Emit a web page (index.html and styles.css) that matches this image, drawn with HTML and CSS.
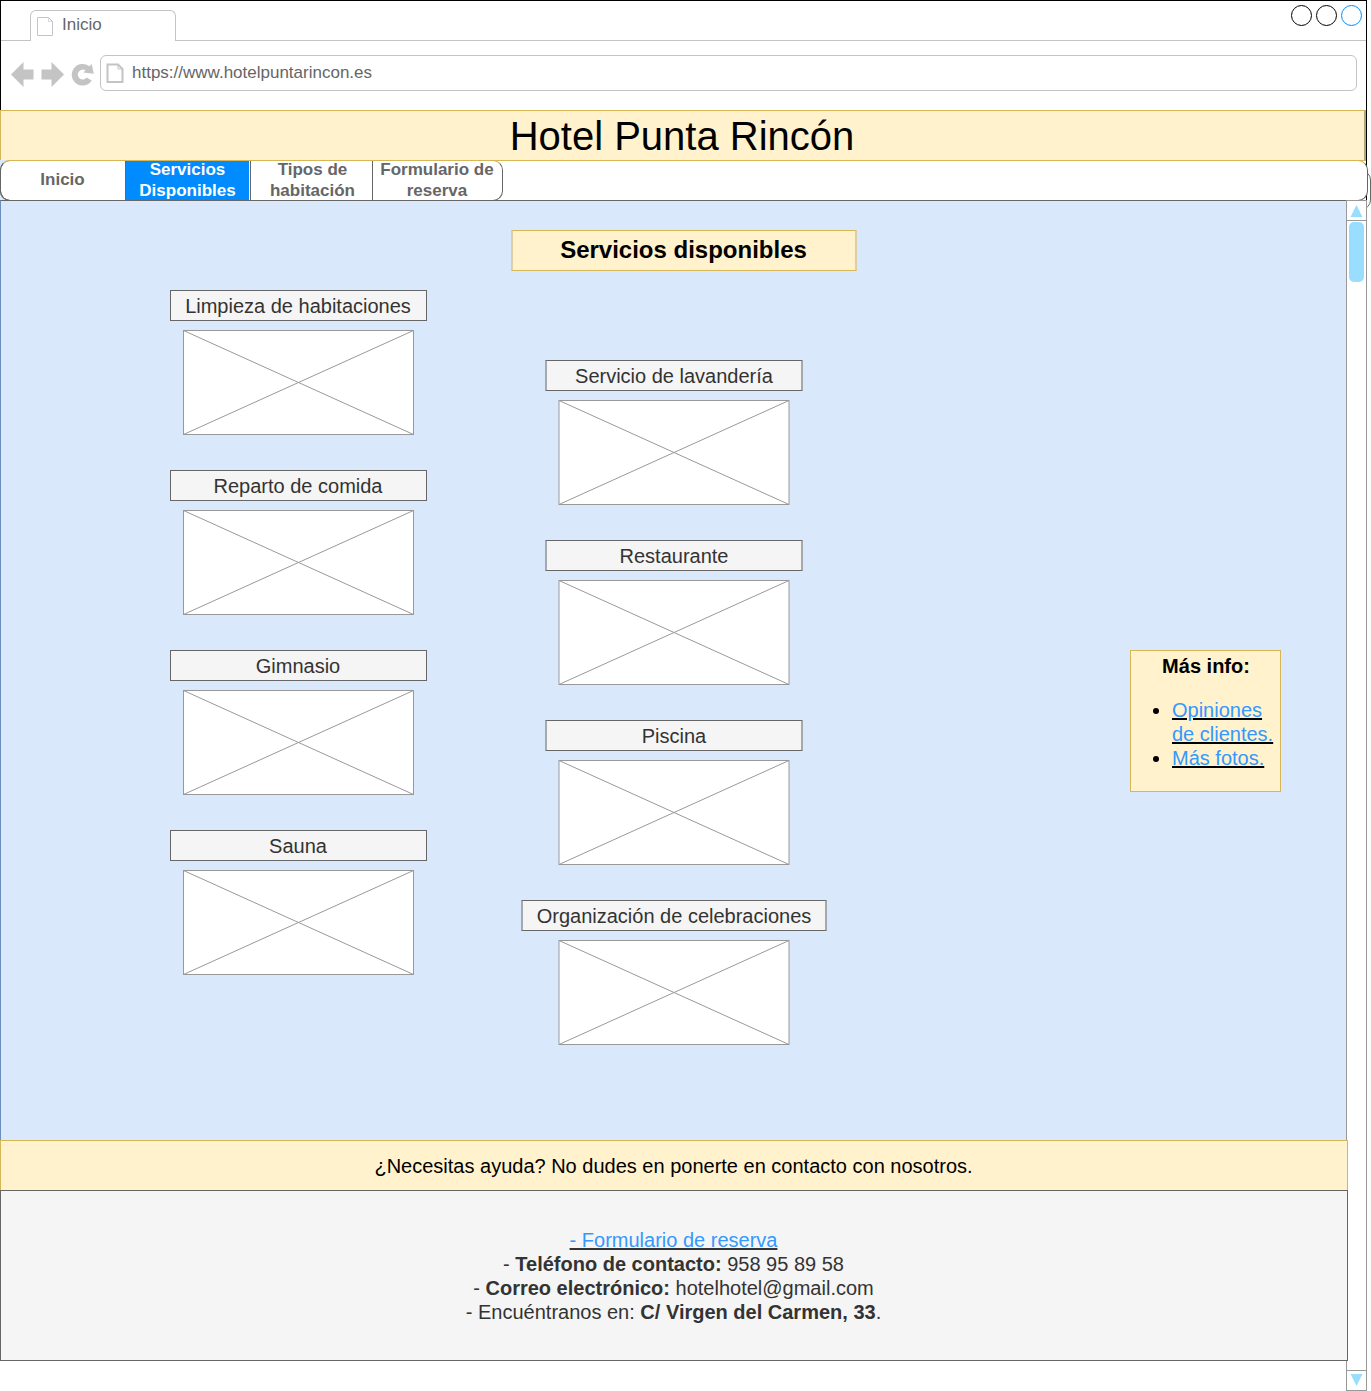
FILE: index.html
```html
<!DOCTYPE html>
<html lang="es">
<head>
<meta charset="utf-8">
<title>Hotel Punta Rincón</title>
<link rel="stylesheet" href="styles.css">
</head>
<body>
<svg width="0" height="0" class="defs">
  <symbol id="photo" viewBox="0 0 231 105"><rect x=".5" y=".5" width="230" height="104" fill="#fff" stroke="#999"/><path d="M.5.5l230 104M.5 104.5l230-104" stroke="#999" fill="none"/></symbol>
  <symbol id="photo-half" viewBox="0 0 232 105"><rect x="1" y=".5" width="230" height="104" fill="#fff" stroke="#999"/><path d="M1 .5l230 104M1 104.5l230-104" stroke="#999" fill="none"/></symbol>
</svg>
<div class="page">
  <div class="window">
    <div class="tabbar">
      <div class="tabbar-lead"></div>
      <div class="browser-tab">
        <svg width="17" height="20" viewBox="0 0 17 20" fill="none" stroke="#c4c4c4"><path d="M.5.5h11l4 4v14H.5z"/><path d="M11.5.5v4h4" stroke-width=".6"/></svg>
        <span>Inicio</span>
      </div>
      <div class="tabbar-rest">
        <i class="circle"></i><i class="circle"></i><i class="circle blue"></i>
      </div>
    </div>
    <div class="toolbar">
      <svg class="tools" width="90" height="30" viewBox="8 60 90 30" fill="#c4c4c4"><path d="M11 74.5L23.5 62v7.5h10v10h-10V87zM64 74.5L51.500 62v7.5h-10v10h10V87z"/><path d="M91.700 80.500A10.800 10.800 0 1 1 89.300 66.300L91.700 64 93.800 73.800 83.300 72.600 85.500 70.500A4.900 4.900 0 1 0 86.600 77.500z"/></svg>
      <div class="address">
        <svg width="19" height="21" viewBox="0 0 19 21" fill="none" stroke="#c4c4c4" stroke-width="2"><path d="M1.500 1.500h10.500l4.500 4.500v13h-15z"/><path d="M12 1.500v4.500h4.500" stroke-width="1"/></svg>
        <span>https://www.hotelpuntarincon.es</span>
      </div>
    </div>
  </div>
  <header class="banner">Hotel Punta Rincón</header>
  <div class="nav-shadow"></div>
  <div class="nav-row">
    <nav class="nav">
      <div class="nav-tabs">
        <a class="nav-item first">Inicio</a>
        <a class="nav-item active">Servicios<br>Disponibles</a>
        <a class="nav-item third">Tipos de<br>habitación</a>
        <a class="nav-item last">Formulario de<br>reserva</a>
      </div>
    </nav>
  </div>
  <div class="body">
    <div class="content">
      <main class="main">
        <h1 class="title">Servicios disponibles</h1>
        <div class="columns">
          <div class="services left">
            <section class="service"><h2 class="label">Limpieza de habitaciones</h2><svg class="photo"><use href="#photo"/></svg></section>
            <section class="service"><h2 class="label">Reparto de comida</h2><svg class="photo"><use href="#photo"/></svg></section>
            <section class="service"><h2 class="label">Gimnasio</h2><svg class="photo"><use href="#photo"/></svg></section>
            <section class="service"><h2 class="label">Sauna</h2><svg class="photo"><use href="#photo"/></svg></section>
          </div>
          <div class="services right">
            <section class="service"><h2 class="label">Servicio de lavandería</h2><svg class="photo"><use href="#photo-half"/></svg></section>
            <section class="service"><h2 class="label">Restaurante</h2><svg class="photo"><use href="#photo-half"/></svg></section>
            <section class="service"><h2 class="label">Piscina</h2><svg class="photo"><use href="#photo-half"/></svg></section>
            <section class="service"><h2 class="label wide">Organización de celebraciones</h2><svg class="photo"><use href="#photo-half"/></svg></section>
          </div>
          <aside class="info">
            <h3>Más info:</h3>
            <ul>
              <li><u><a>Opiniones de clientes.</a></u></li>
              <li><u><a>Más fotos.</a></u></li>
            </ul>
          </aside>
        </div>
      </main>
      <div class="help">¿Necesitas ayuda? No dudes en ponerte en contacto con nosotros.</div>
      <footer class="footer">
        <div><u><a>- Formulario de reserva</a></u></div>
        <div>- <b>Teléfono de contacto:</b> 958 95 89 58</div>
        <div>- <b>Correo electrónico:</b> hotelhotel@gmail.com</div>
        <div>- Encuéntranos en: <b>C/ Virgen del Carmen, 33</b>.</div>
      </footer>
    </div>
    <div class="scrollbar">
      <div class="arrow"><svg width="13" height="12" viewBox="0 0 13 12"><path d="M6.500 0L12.500 12H.5z" fill="#9df"/></svg></div>
      <div class="track"><div class="thumb"></div></div>
      <div class="arrow down"><svg width="13" height="12" viewBox="0 0 13 12"><path d="M.5 0h12l-6 12z" fill="#9df"/></svg></div>
    </div>
  </div>
</div>
</body>
</html>
```
FILE: styles.css
```css
* { box-sizing: border-box; }
body { margin: 0; background: #fff; font-family: "Liberation Sans", Arial, sans-serif; font-size: 20px; line-height: 24px; color: #000; }
h1, h2, h3, ul { margin: 0; padding: 0; }
.defs { position: absolute; }
.page { position: relative; width: 1371px; height: 1391px; display: flex; flex-direction: column; overflow: hidden; }

.window { width: 1367px; height: 110px; border: 1px solid #000; border-bottom: 0; color: #666; font-size: 17px; }
.tabbar { display: flex; height: 40px; align-items: flex-end; }
.tabbar-lead { width: 29px; border-bottom: 1px solid #c4c4c4; }
.browser-tab { display: flex; width: 146px; height: 31px; padding: 6px 0 0 6px; gap: 8px; border: 1px solid #c4c4c4; border-bottom: 0; border-radius: 6px 6px 0 0; line-height: 20px; }
.browser-tab span { margin-top: -2px; }
.tabbar-rest { flex: 1; height: 40px; display: flex; justify-content: flex-end; gap: 4px; padding: 4px 4px 0 0; border-bottom: 1px solid #c4c4c4; }
.circle { width: 21px; height: 21px; border: 1px solid #000; border-radius: 50%; }
.circle.blue { border-color: #008cff; }
.toolbar { display: flex; padding: 14px 9px 0 7px; }
.tools { margin: 5px 0 0; }
.address { flex: 1; height: 36px; margin-left: 2px; padding: 7px 0 0 5px; display: flex; gap: 7px; border: 1px solid #c4c4c4; border-radius: 6px; line-height: 20px; }

.banner { width: 1366px; height: 51px; border: 1px solid #d6b656; border-right: 2px solid #b3a678; background: #fff2cc; font-size: 40px; line-height: 50px; text-align: center; padding-right: 1px; box-shadow: 1px 0 #000; }
.nav-shadow { position: absolute; left: 1300px; top: 170px; width: 71px; height: 40px; border: 1px solid #666; border-radius: 10px; }
.nav-row { position: relative; width: 1368px; height: 41px; margin-top: -1px; background: linear-gradient(#000, #000) 1366px 0 / 1px 100% no-repeat, linear-gradient(#dae8fc, #dae8fc) 0 0 / 1346px 100% no-repeat; }
.nav { width: 1368px; height: 41px; border: 1px solid #666; border-top-color: #d6b656; border-radius: 10px; background: #fff; }
.nav-tabs { display: flex; width: 503px; height: 41px; margin: -1px; border: 1px solid #666; border-top-color: #d6b656; border-radius: 10px; font-size: 17px; line-height: 20.6px; font-weight: bold; color: #666; text-align: center; }
.nav-item { display: flex; align-items: center; justify-content: center; height: 39px; }
.first { width: 124px; padding-right: 1px; }
.active { width: 124px; margin-right: 1px; border-left: 1px solid #666; background: #008cff; color: #fff; }
.third { width: 122px; border-left: 1px solid #666; padding-left: 2px; }
.last { flex: 1; border-left: 1px solid #666; padding-right: 1px; }

.body { display: grid; grid-template-columns: 1346px 21px; height: 1191px; margin-top: -1px; }
.content { position: relative; z-index: 1; }
.main { height: 940px; padding-top: 29px; border-left: 1px solid #6c8ebf; border-top: 1px solid #666; background: #dae8fc; }
.title { width: 346px; height: 41px; margin-left: 510px; border: 1px solid #d6b656; border-inline: 2px solid #dfcda3; padding-right: 1px; background: #fff2cc; font-size: 24px; line-height: 38px; text-align: center; }
.columns { display: flex; padding: 19px 0 0 169px; }
.services { display: flex; flex-direction: column; align-items: center; gap: 35px; }
.left { width: 257px; }
.right { width: 306px; margin: 70px 0 0 94px; }
.service { display: flex; flex-direction: column; align-items: center; }
.label { width: 257px; height: 31px; padding-right: 1px; border: 1px solid #666; background: #f5f5f5; color: #333; font-size: 20px; line-height: 30px; font-weight: normal; text-align: center; }
.photo { display: block; width: 231px; height: 105px; margin-top: 9px; }
.right .label { width: 258px; padding-right: 0; border-inline: 2px solid #a5a9ad; }
.right .label.wide { width: 306px; }
.right .photo { width: 232px; }
.info { width: 151px; height: 142px; margin: 360px 0 0 303px; padding-top: 3px; border: 1px solid #d6b656; background: #fff2cc; }
.info h3 { padding-left: 1px; font-size: 20px; text-align: center; }
.info ul { padding: 20px 0 0 41px; }
u a { color: #39f; }

.help, .footer { position: relative; width: 1348px; padding-right: 1px; text-align: center; }
.help { height: 51px; border: 1px solid #d6b656; background: #fff2cc; line-height: 50px; }
.footer { height: 171px; margin-top: -1px; padding-top: 37px; border: 1px solid #666; background: #f5f5f5; color: #333; }

.scrollbar { display: flex; flex-direction: column; position: relative; border: 1px solid #999; background: #fff; }
.arrow { height: 20px; padding: 4px 0 0 3px; line-height: 0; border-bottom: 1px solid #999; }
.track { flex: 1; padding: 1px 2px; }
.thumb { width: 15px; height: 60px; border-radius: 5px; background: #9df; }
.arrow.down { border: 0; border-top: 1px solid #999; padding-top: 3px; }
```
